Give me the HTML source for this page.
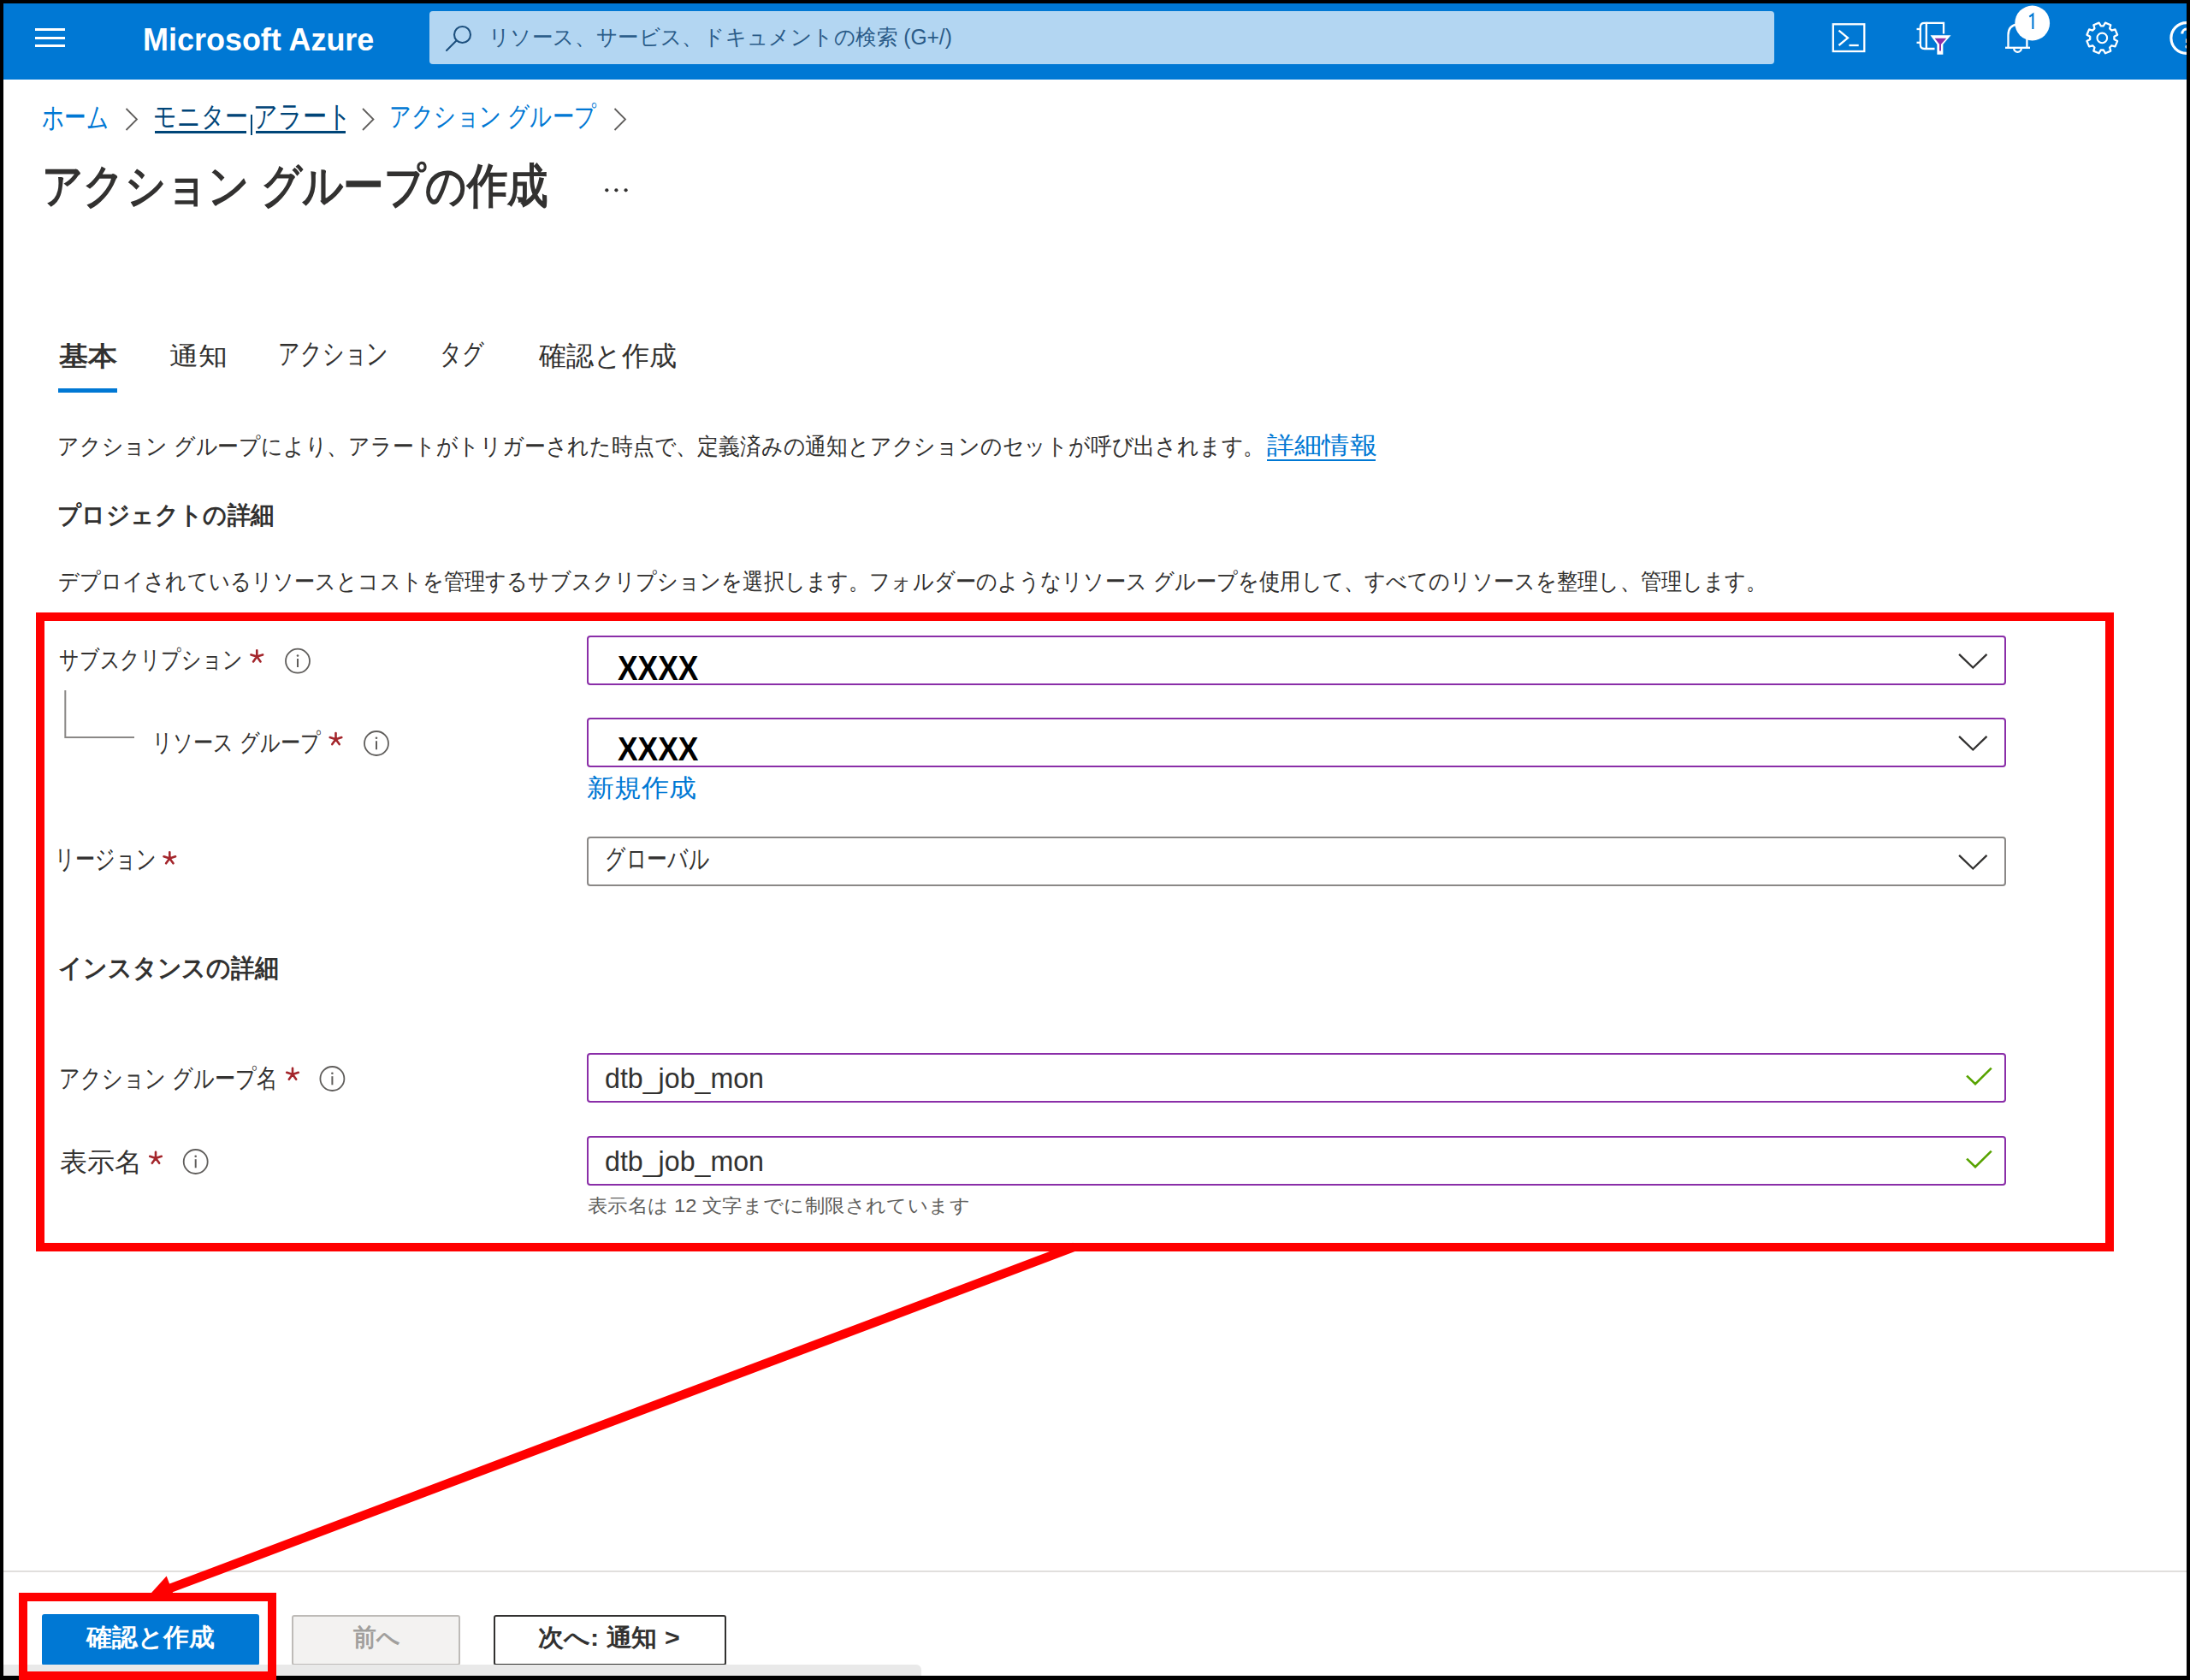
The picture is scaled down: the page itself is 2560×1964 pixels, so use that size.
<!DOCTYPE html>
<html lang="ja">
<head>
<meta charset="utf-8">
<title>アクション グループの作成 - Microsoft Azure</title>
<style>
html,body{margin:0;padding:0;}
body{width:2560px;height:1964px;background:#000;position:relative;overflow:hidden;font-family:"Liberation Sans",sans-serif;color:#323130;}
.a{position:absolute;}
.t{position:absolute;white-space:nowrap;line-height:1;transform-origin:0 0;}
.inp{position:absolute;left:686px;width:1655px;height:54px;border:2px solid #8a2ea8;border-radius:4px;background:#fff;box-sizing:content-box;}
svg{position:absolute;overflow:visible;}
</style>
</head>
<body>
<div class="a" style="left:4px;top:4px;width:2552px;height:1955px;background:#fff"></div>
<div class="a" style="left:4px;top:4px;width:2552px;height:89px;background:#0078d4"></div>

<!-- header -->
<div class="a" style="left:41px;top:33px;width:35px;height:3px;background:#fff"></div>
<div class="a" style="left:41px;top:43px;width:35px;height:3px;background:#fff"></div>
<div class="a" style="left:41px;top:52px;width:35px;height:3px;background:#fff"></div>
<div class="t" style="left:166.5px;top:27.5px;font-size:37.84px;font-weight:bold;color:#fff;transform:scaleX(0.9504);--fw:269.9">Microsoft Azure</div>
<div class="a" style="left:502px;top:13px;width:1572px;height:62px;background:#b3d6f2;border-radius:4px"></div>
<svg style="left:0;top:0;overflow:hidden" width="2556" height="100" viewBox="0 0 2556 100">
 <g fill="none" stroke="#1c4f7d" stroke-width="2.1" stroke-linecap="round">
  <circle cx="540.5" cy="40.5" r="9.5"/>
  <line x1="533.5" y1="47.5" x2="522" y2="59"/>
 </g>
 <g fill="none" stroke="#fff" stroke-width="2.3">
  <rect x="2142.8" y="28.3" width="36.5" height="31.7"/>
  <polyline points="2149.5,35.6 2160,44.3 2149.5,53"/>
  <line x1="2161.5" y1="53" x2="2172.7" y2="53"/>
  <path d="M2251.8,26.8 H2272 V39.5"/>
  <path d="M2261.5,57 H2249.5 Q2244.8,57 2244.8,52 V31.5 Q2244.8,26.8 2249.5,26.8 H2251.8 V57"/>
  <line x1="2240.5" y1="34" x2="2246" y2="34"/>
  <line x1="2240.5" y1="49.8" x2="2246" y2="49.8"/>
  <path d="M2258.8,42.5 H2278 L2270.2,51.5 V62.5 H2265.5 V51.5 Z" fill="#fff"/>
 </g>
 <path d="M2261.6,44.8 H2275.2 L2269,51.7 V59.5 H2267 V51.7 Z" fill="#8a2ea8"/>
 <g fill="none" stroke="#fff" stroke-width="2.3">
  <path d="M2344,55.8 H2373"/>
  <path d="M2347.5,55.8 V41 Q2347.5,29.5 2358.5,28.5 Q2369.4,29.5 2369.4,41 V55.8"/>
  <path d="M2354.2,56.5 A4.3,4.3 0 0 0 2362.8,56.5"/>
 </g>
 <circle cx="2375.7" cy="27" r="20.4" fill="#fff"/>
 <path d="M2372.3,19.6 L2376.4,16.5 V34" fill="none" stroke="#0078d4" stroke-width="2.1"/>
 <g fill="none" stroke="#fff" stroke-width="2.3" stroke-linejoin="round">
  <path d="M2460.99,26.58 L2467.29,29.19 L2466.18,33.32 L2468.38,35.52 L2472.51,34.41 L2475.12,40.71 L2471.41,42.84 L2471.41,45.96 L2475.12,48.09 L2472.51,54.39 L2468.38,53.28 L2466.18,55.48 L2467.29,59.61 L2460.99,62.22 L2458.86,58.51 L2455.74,58.51 L2453.61,62.22 L2447.31,59.61 L2448.42,55.48 L2446.22,53.28 L2442.09,54.39 L2439.48,48.09 L2443.19,45.96 L2443.19,42.84 L2439.48,40.71 L2442.09,34.41 L2446.22,35.52 L2448.42,33.32 L2447.31,29.19 L2453.61,26.58 L2455.74,30.29 L2458.86,30.29 Z"/>
  <circle cx="2457.3" cy="44.4" r="5.8" stroke-width="2.1"/>
  <circle cx="2555.8" cy="44.5" r="17.9" stroke-width="3.1"/>
  <path d="M2550.8,39.5 A5.6,5.6 0 0 1 2562,39.5 Q2562,43 2556.5,46.5 V50" stroke-width="3.1" stroke-linejoin="miter"/>
 </g>
 <circle cx="2556.5" cy="54.8" r="2" fill="#fff"/>
</svg>
<div class="t" style="left:571.3px;top:30.5px;font-size:25.00px;font-weight:normal;color:#2a5b88;transform:scaleX(0.9805);--fw:542.2">リソース、サービス、ドキュメントの検索 (G+/)</div>

<!-- breadcrumb -->
<div class="t" style="left:49.0px;top:118.8px;font-size:35.00px;font-weight:normal;color:#0078d4;transform:scaleX(0.7327);--fw:78.4">ホーム</div><div class="t" style="left:178.8px;top:119.8px;font-size:32.22px;font-weight:normal;color:#004578;transform:scaleX(0.8443);--fw:110.6">モニター</div><div class="t" style="left:296.2px;top:118.5px;font-size:34.52px;font-weight:normal;color:#004578;transform:scaleX(0.8056);--fw:115.2">アラート</div><div class="t" style="left:455.4px;top:120.7px;font-size:31.96px;font-weight:normal;color:#0078d4;transform:scaleX(0.7944);--fw:242.3">アクション グループ</div>
<div class="a" style="left:181px;top:153px;width:107px;height:3px;background:#004578"></div>
<div class="a" style="left:293px;top:134px;width:2px;height:24px;background:#004578"></div>
<div class="a" style="left:299px;top:153px;width:105px;height:3px;background:#004578"></div>
<svg style="left:0;top:100px" width="800" height="80" viewBox="0 100 800 80">
 <g fill="none" stroke="#605e5c" stroke-width="1.8">
  <polyline points="147.5,127 160,139.5 147.5,152"/>
  <polyline points="424,127 436.5,139.5 424,152"/>
  <polyline points="718.5,127 731,139.5 718.5,152"/>
 </g>
</svg>

<!-- title -->
<div class="t" style="left:48.7px;top:189.6px;font-size:55.45px;font-weight:bold;color:#323130;transform:scaleX(0.8651);--fw:591.7">アクション グループの作成</div>
<svg style="left:0;top:200px" width="800" height="50" viewBox="0 200 800 50">
 <g fill="#323130"><circle cx="709.3" cy="222.3" r="2.1"/><circle cx="720.4" cy="222.3" r="2.1"/><circle cx="731.6" cy="222.3" r="2.1"/></g>
</svg>

<!-- tabs -->
<div class="t" style="left:69.0px;top:400.7px;font-size:30.61px;font-weight:bold;color:#323130;transform:scaleX(1.1016);--fw:68.3">基本</div><div class="t" style="left:198.0px;top:401.4px;font-size:29.47px;font-weight:normal;color:#323130;transform:scaleX(1.1741);--fw:68.1">通知</div><div class="t" style="left:324.5px;top:397.0px;font-size:33.72px;font-weight:normal;color:#323130;transform:scaleX(0.7389);--fw:129.3">アクション</div><div class="t" style="left:513.7px;top:396.7px;font-size:33.33px;font-weight:normal;color:#323130;transform:scaleX(0.7691);--fw:52.3">タグ</div><div class="t" style="left:630.0px;top:400.4px;font-size:32.29px;font-weight:normal;color:#323130;transform:scaleX(1.0019);--fw:161.3">確認と作成</div>
<div class="a" style="left:68px;top:454px;width:69px;height:5px;background:#0078d4"></div>

<!-- description -->
<div class="t" style="left:66.5px;top:507.7px;font-size:27.45px;font-weight:normal;color:#323130;transform:scaleX(0.9208);--fw:1411.6">アクション グループにより、アラートがトリガーされた時点で、定義済みの通知とアクションのセットが呼び出されます。</div><div class="t" style="left:1480.7px;top:507.4px;font-size:28.12px;font-weight:normal;color:#0078d4;transform:scaleX(1.1509);--fw:128.9">詳細情報</div>
<div class="a" style="left:1481px;top:537px;width:127px;height:2px;background:#0078d4"></div>
<div class="t" style="left:67.1px;top:588.3px;font-size:28.71px;font-weight:bold;color:#323130;transform:scaleX(0.9463);--fw:253.6">プロジェクトの詳細</div>
<div class="t" style="left:67.5px;top:665.7px;font-size:27.18px;font-weight:normal;color:#323130;transform:scaleX(0.8964);--fw:1998.1">デプロイされているリソースとコストを管理するサブスクリプションを選択します。フォルダーのようなリソース グループを使用して、すべてのリソースを整理し、管理します。</div>

<!-- form -->
<div class="inp" style="top:743px"></div>
<div class="inp" style="top:839px"></div>
<div class="inp" style="top:978px;border-color:#8a8886"></div>
<div class="inp" style="top:1231px"></div>
<div class="inp" style="top:1328px"></div>
<div class="t" style="left:69.1px;top:756.7px;font-size:28.57px;font-weight:normal;color:#323130;transform:scaleX(0.7944);--fw:214.5">サブスクリプション</div><div class="t" style="left:721.6px;top:760.5px;font-size:40.58px;font-weight:bold;color:#000;transform:scaleX(0.8713);--fw:94.1">XXXX</div><div class="t" style="left:177.6px;top:853.7px;font-size:28.57px;font-weight:normal;color:#323130;transform:scaleX(0.8016);--fw:197.2">リソース グループ</div><div class="t" style="left:721.6px;top:855.7px;font-size:39.13px;font-weight:bold;color:#000;transform:scaleX(0.9048);--fw:94.1">XXXX</div><div class="t" style="left:686.4px;top:906.7px;font-size:29.00px;font-weight:normal;color:#0078d4;transform:scaleX(1.1026);--fw:127.9">新規作成</div><div class="t" style="left:63.6px;top:988.9px;font-size:31.40px;font-weight:normal;color:#323130;transform:scaleX(0.7484);--fw:119.0">リージョン</div><div class="t" style="left:706.6px;top:988.8px;font-size:31.87px;font-weight:normal;color:#323130;transform:scaleX(0.7445);--fw:122.1">グローバル</div><div class="t" style="left:67.6px;top:1117.0px;font-size:29.70px;font-weight:bold;color:#323130;transform:scaleX(0.9318);--fw:258.1">インスタンスの詳細</div><div class="t" style="left:68.6px;top:1245.7px;font-size:29.90px;font-weight:normal;color:#323130;transform:scaleX(0.8082);--fw:255.4">アクション グループ名</div><div class="t" style="left:706.7px;top:1242.9px;font-size:34.04px;font-weight:normal;color:#323130;transform:scaleX(0.9452);--fw:186.2">dtb_job_mon</div><div class="t" style="left:70.0px;top:1343.1px;font-size:30.53px;font-weight:normal;color:#323130;transform:scaleX(1.0333);--fw:96.1">表示名</div><div class="t" style="left:706.7px;top:1339.9px;font-size:34.04px;font-weight:normal;color:#323130;transform:scaleX(0.9452);--fw:186.2">dtb_job_mon</div><div class="t" style="left:687.3px;top:1399.0px;font-size:22.33px;font-weight:normal;color:#605e5c;transform:scaleX(1.0613);--fw:446.8">表示名は 12 文字までに制限されています</div>
<svg style="left:0;top:700px" width="2560" height="750" viewBox="0 700 2560 750">
 <defs>
  <g id="ast"><path d="M0,-7.2 V0 M0,0 L-6.8,-2.2 M0,0 L6.8,-2.2 M0,0 L-4.2,5.8 M0,0 L4.2,5.8" stroke="#a4262c" stroke-width="2.6" stroke-linecap="round" fill="none"/></g>
  <g id="info"><circle r="14" fill="none" stroke="#605e5c" stroke-width="1.8"/><circle cx="0" cy="-6.2" r="1.3" fill="#605e5c"/><path d="M0,-2.8 V7.3" stroke="#605e5c" stroke-width="2"/></g>
  <g id="chev"><polyline points="-16.2,-8 0,7.7 16.2,-8" fill="none" stroke="#323130" stroke-width="2.3"/></g>
  <g id="chk"><polyline points="-14.4,-1.2 -4.5,8.4 14.3,-10.2" fill="none" stroke="#57a300" stroke-width="2.6"/></g>
 </defs>
 <use href="#ast" x="300.3" y="767.6"/>
 <use href="#info" x="348" y="772.7"/>
 <use href="#ast" x="392.5" y="864.3"/>
 <use href="#info" x="440" y="869"/>
 <use href="#ast" x="198.3" y="1003.5"/>
 <use href="#ast" x="342" y="1256"/>
 <use href="#info" x="388.4" y="1261"/>
 <use href="#ast" x="182" y="1354"/>
 <use href="#info" x="228.7" y="1358"/>
 <use href="#chev" x="2306.3" y="772.8"/>
 <use href="#chev" x="2306.3" y="868.8"/>
 <use href="#chev" x="2306.3" y="1007.8"/>
 <use href="#chk" x="2313.5" y="1258.8"/>
 <use href="#chk" x="2313.5" y="1355.8"/>
 <path d="M76.3,807 V862 H157" fill="none" stroke="#8a8886" stroke-width="2"/>
</svg>

<!-- footer -->
<div class="a" style="left:4px;top:1836px;width:2552px;height:2px;background:#e1dfdd"></div>
<div class="a" style="left:49px;top:1887px;width:254px;height:60px;background:#0078d4;border-radius:3px"></div>
<div class="a" style="left:341px;top:1888px;width:193px;height:55px;background:#f3f2f1;border:2px solid #bebbb8;border-radius:3px"></div>
<div class="a" style="left:577px;top:1888px;width:268px;height:55px;background:#fff;border:2px solid #323130;border-radius:3px"></div>
<div class="t" style="left:100.9px;top:1900.0px;font-size:29.00px;font-weight:bold;color:#fff;transform:scaleX(1.0274);--fw:150.0">確認と作成</div><div class="t" style="left:413.0px;top:1900.4px;font-size:28.87px;font-weight:bold;color:#a19f9d;transform:scaleX(0.9237);--fw:54.5">前へ</div><div class="t" style="left:629.4px;top:1900.0px;font-size:28.43px;font-weight:bold;color:#323130;transform:scaleX(1.0697);--fw:165.8">次へ: 通知 &gt;</div>
<div class="a" style="left:4px;top:1946px;width:1073px;height:13px;background:#e9e9e9;border-top-right-radius:6px"></div>

<!-- annotations -->
<div class="a" style="left:42px;top:716px;width:2409px;height:727px;border:10px solid #ff0000"></div>
<svg style="left:0;top:0" width="2560" height="1964" viewBox="0 0 2560 1964">
 <line x1="1256" y1="1457.7" x2="198" y2="1857.2" stroke="#ff0000" stroke-width="10.5"/>
 <polygon points="172.7,1866.7 194.7,1842.6 205.3,1870.5" fill="#ff0000"/>
</svg>
<div class="a" style="left:22px;top:1862px;width:281px;height:82px;border:10px solid #ff0000"></div>
<script>
(function(){var els=document.querySelectorAll('.t[style*="--fw"]');var ws=[];for(var i=0;i<els.length;i++){ws.push(els[i].offsetWidth);}for(var i=0;i<els.length;i++){var fw=parseFloat(getComputedStyle(els[i]).getPropertyValue('--fw'));if(ws[i]>0&&fw>0){els[i].style.transform='scaleX('+(fw/ws[i]).toFixed(4)+')';}}})();
</script>
</body>
</html>
